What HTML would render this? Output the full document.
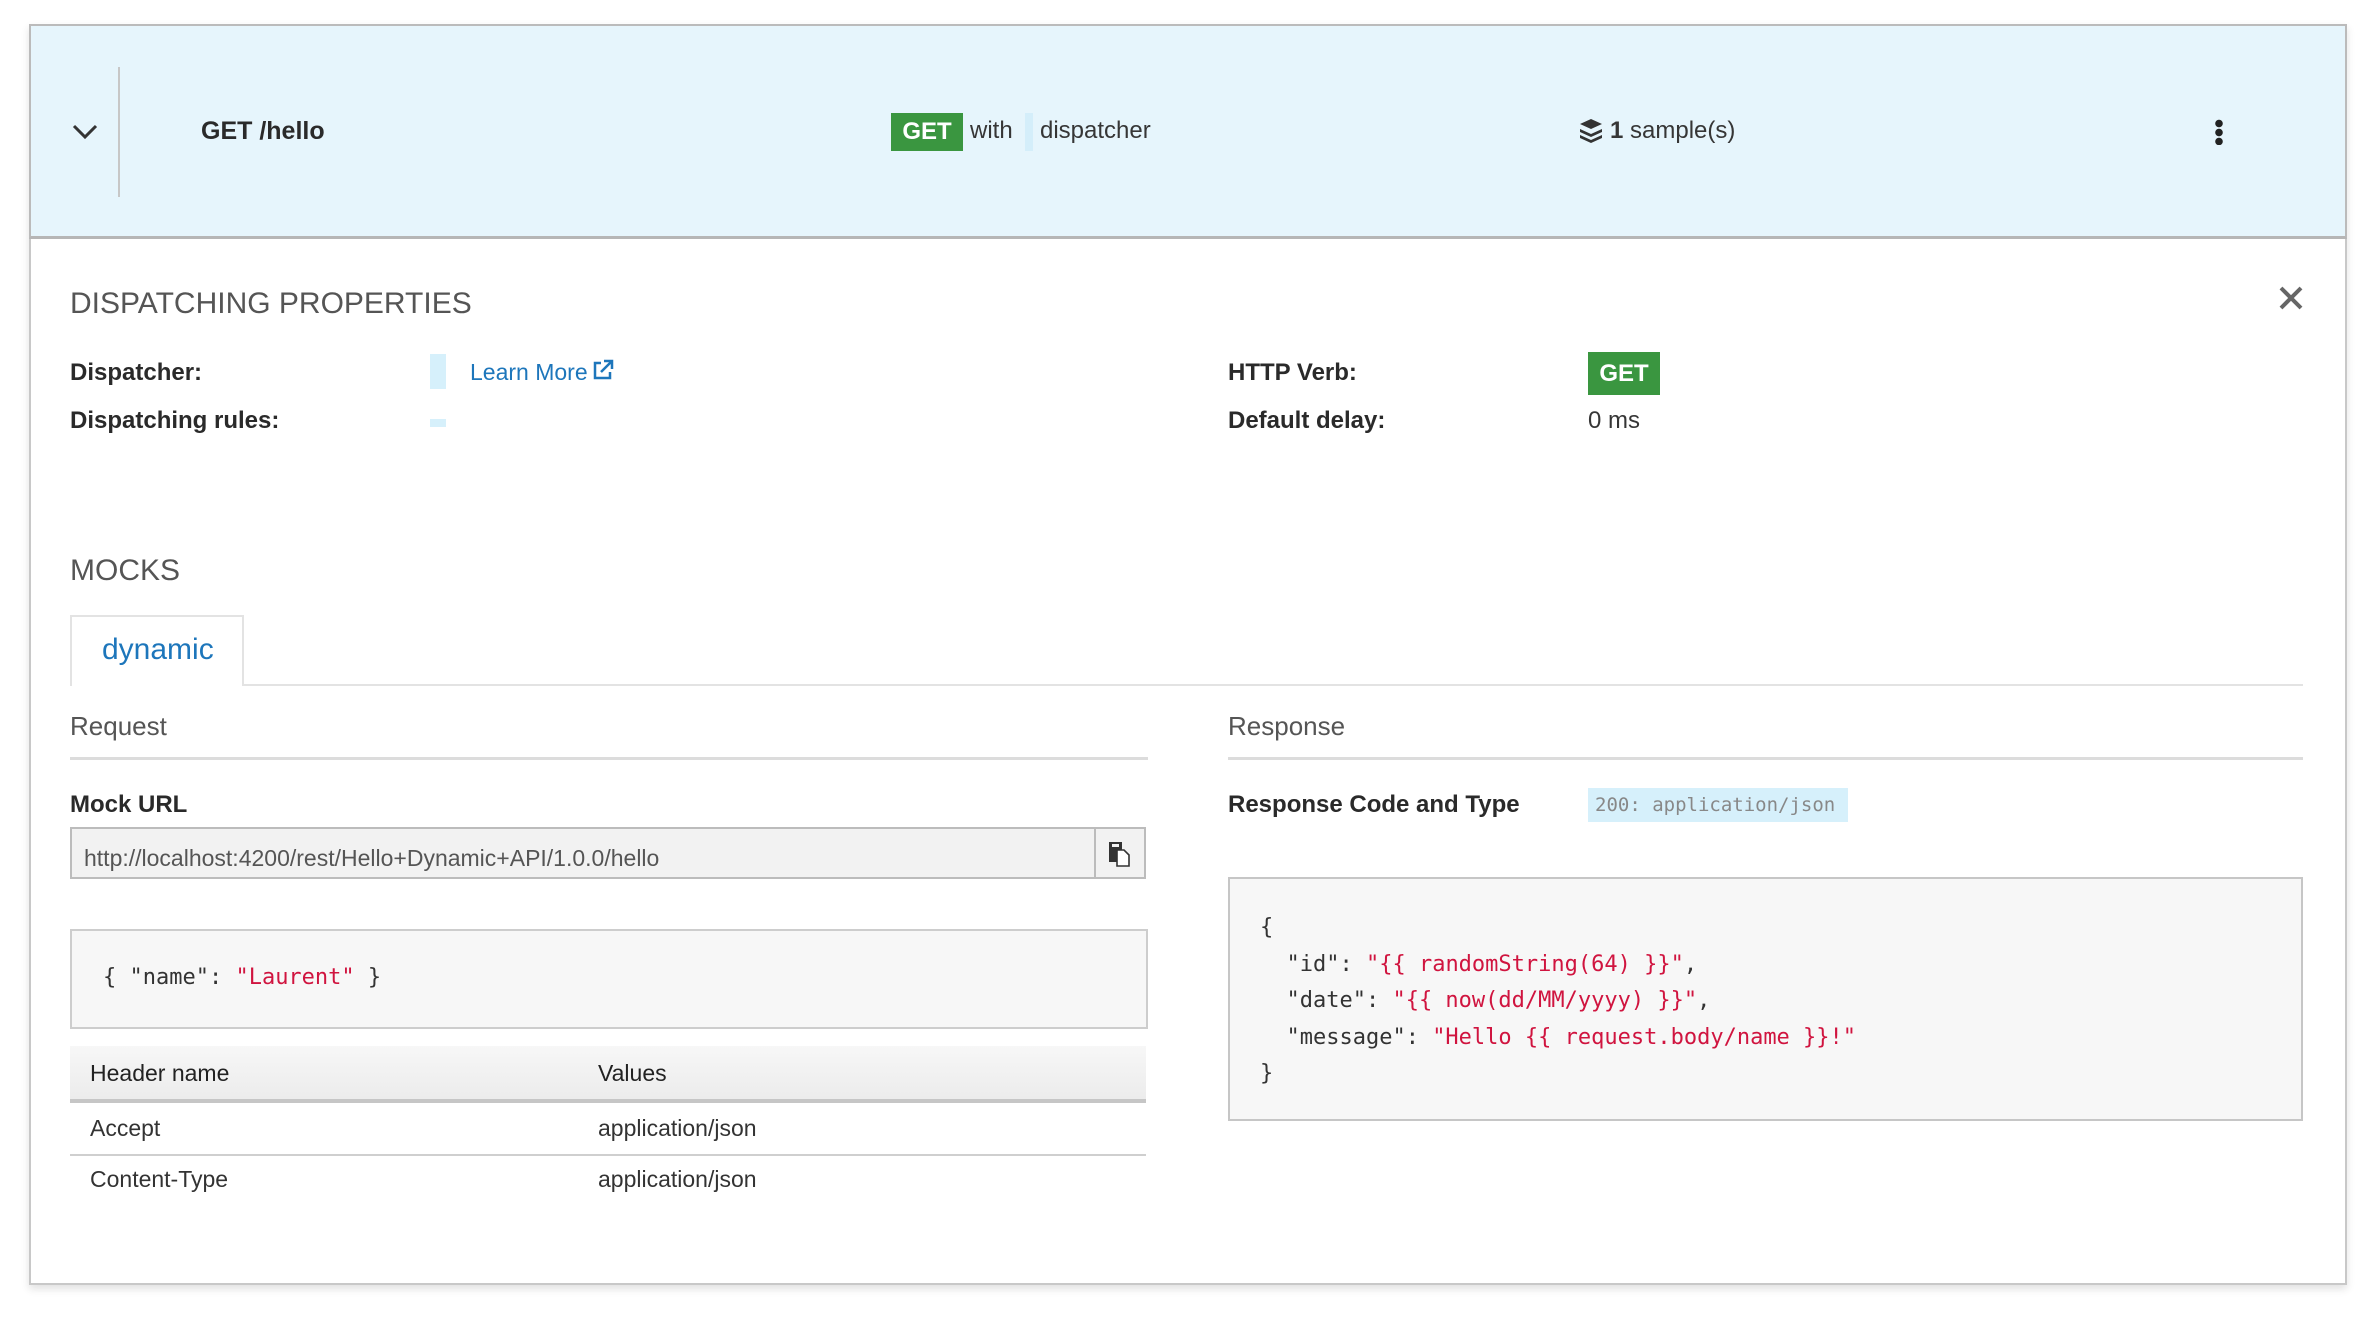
<!DOCTYPE html>
<html><head><meta charset="utf-8"><style>
*{box-sizing:border-box;margin:0;padding:0}
body{width:2380px;height:1318px;background:#fff;font-family:"Liberation Sans",sans-serif;color:#363636;position:relative;overflow:hidden}
.a{position:absolute;white-space:nowrap}
.card{position:absolute;left:29px;top:24px;width:2318px;height:1261px;border:2px solid #c8c8c8;border-top-color:#bbb;background:#fff;box-shadow:0 4px 8px rgba(0,0,0,.12)}
.hdr{position:absolute;left:29px;top:24px;width:2318px;height:215px;background:#e6f5fc;border:2px solid #bbb;border-bottom:3px solid #b6b6b6}
.b{font-weight:bold;color:#2a2a2a}
.badge{background:#3a9640;color:#fff;font-weight:bold;text-align:center}
.mono{font-family:"DejaVu Sans Mono","Liberation Mono",monospace}
.red{color:#d0143f}
</style></head><body>
<div class="card"></div>
<div class="hdr"></div>
<svg class="a" style="left:72px;top:122px" width="26" height="20" viewBox="0 0 26 20"><path d="M2 4 L13 15 L24 4" fill="none" stroke="#333" stroke-width="3"/></svg>
<div class="a" style="left:118px;top:67px;width:2px;height:130px;background:#c7c7c7"></div>
<div class="a b" style="left:201px;top:117px;font-size:25px">GET /hello</div>
<div class="a badge" style="left:891px;top:113px;width:72px;height:38px;font-size:24px;line-height:38px">GET</div>
<div class="a" style="left:970px;top:117px;font-size:24px">with</div>
<div class="a" style="left:1025px;top:113px;width:8px;height:38px;background:#d4eefa"></div>
<div class="a" style="left:1040px;top:117px;font-size:24px">dispatcher</div>
<svg class="a" style="left:1579px;top:118px" width="24" height="26" viewBox="0 0 24 26"><path d="M12 1 L23 6 L12 11 L1 6 Z" fill="#333"/><path d="M1 11 L12 16 L23 11 L23 14 L12 19 L1 14Z M1 17 L12 22 L23 17 L23 20 L12 25 L1 20Z" fill="#333"/></svg>
<div class="a" style="left:1610px;top:117px;font-size:24px"><b>1</b> sample(s)</div>
<div class="a" style="left:2215px;top:119px;width:8px;height:26px;background:radial-gradient(circle,#222 3.5px,transparent 4px) 0 0/8px 9px repeat-y"></div>

<svg class="a" style="left:2278px;top:285px" width="26" height="26" viewBox="0 0 26 26"><path d="M3 3 L23 23 M23 3 L3 23" stroke="#666" stroke-width="4"/></svg>
<div class="a" style="left:70px;top:287px;font-size:30px;color:#555">DISPATCHING PROPERTIES</div>
<div class="a b" style="left:70px;top:359px;font-size:24px">Dispatcher:</div>
<div class="a b" style="left:70px;top:407px;font-size:24px">Dispatching rules:</div>
<div class="a" style="left:430px;top:354px;width:16px;height:35px;background:#d6f0fb"></div>
<div class="a" style="left:430px;top:419px;width:16px;height:8px;background:#d6f0fb"></div>
<div class="a" style="left:470px;top:359px;font-size:23px;color:#1d76bb">Learn More</div>
<svg class="a" style="left:592px;top:359px" width="22" height="22" viewBox="0 0 22 22"><path d="M9 4 H3 V19 H18 V13" fill="none" stroke="#1d76bb" stroke-width="2.5"/><path d="M9 13 L19 3 M12 2 H20 V10" fill="none" stroke="#1d76bb" stroke-width="2.5"/></svg>
<div class="a b" style="left:1228px;top:359px;font-size:24px">HTTP Verb:</div>
<div class="a b" style="left:1228px;top:407px;font-size:24px">Default delay:</div>
<div class="a badge" style="left:1588px;top:352px;width:72px;height:43px;font-size:24px;line-height:43px">GET</div>
<div class="a" style="left:1588px;top:407px;font-size:24px">0 ms</div>

<div class="a" style="left:70px;top:554px;font-size:30px;color:#555">MOCKS</div>
<div class="a" style="left:70px;top:684px;width:2233px;height:2px;background:#e3e3e3"></div>
<div class="a" style="left:70px;top:615px;width:174px;height:71px;border:2px solid #e3e3e3;border-bottom:none;background:#fff"></div>
<div class="a" style="left:102px;top:633px;font-size:30px;color:#1d76bb">dynamic</div>

<div class="a" style="left:70px;top:711px;font-size:26px;color:#555">Request</div>
<div class="a" style="left:70px;top:757px;width:1078px;height:3px;background:#dcdcdc"></div>
<div class="a" style="left:1228px;top:711px;font-size:26px;color:#555">Response</div>
<div class="a" style="left:1228px;top:757px;width:1075px;height:3px;background:#dcdcdc"></div>

<div class="a b" style="left:70px;top:791px;font-size:24px">Mock URL</div>
<div class="a" style="left:70px;top:827px;width:1076px;height:52px;border:2px solid #bcbcbc;background:#f2f2f2"></div>
<div class="a" style="left:1094px;top:827px;width:52px;height:52px;border:2px solid #bcbcbc;background:#f2f2f2"></div>
<svg class="a" style="left:1107px;top:841px" width="24" height="26" viewBox="0 0 24 26"><rect x="2" y="1" width="13" height="20" fill="#333"/><rect x="5" y="3" width="7" height="3" fill="#f2f2f2"/><path d="M10 9 H17 L22 14 V25 H10 Z" fill="#fff" stroke="#333" stroke-width="1.6"/></svg>
<div class="a" style="left:84px;top:845px;font-size:23px;color:#555">http://localhost:4200/rest/Hello+Dynamic+API/1.0.0/hello</div>

<div class="a" style="left:70px;top:929px;width:1078px;height:100px;border:2px solid #cdcdcd;background:#f7f7f7"></div>
<div class="a mono" style="left:103px;top:965px;font-size:22px;color:#333">{ "name": <span class="red">"Laurent"</span> }</div>

<div class="a" style="left:70px;top:1046px;width:1076px;height:57px;background:linear-gradient(#f7f7f7,#ececec);border-bottom:4px solid #c6c6c6"></div>
<div class="a" style="left:90px;top:1060px;font-size:23px;color:#222">Header name</div>
<div class="a" style="left:598px;top:1060px;font-size:23px;color:#222">Values</div>
<div class="a" style="left:90px;top:1115px;font-size:23px;color:#333">Accept</div>
<div class="a" style="left:598px;top:1115px;font-size:23px;color:#333">application/json</div>
<div class="a" style="left:70px;top:1154px;width:1076px;height:2px;background:#cfcfcf"></div>
<div class="a" style="left:90px;top:1166px;font-size:23px;color:#333">Content-Type</div>
<div class="a" style="left:598px;top:1166px;font-size:23px;color:#333">application/json</div>

<div class="a b" style="left:1228px;top:791px;font-size:24px">Response Code and Type</div>
<div class="a mono" style="left:1588px;top:788px;width:260px;height:34px;background:#d6f0fb;color:#888;font-size:19px;line-height:34px;padding-left:7px">200: application/json</div>

<div class="a" style="left:1228px;top:877px;width:1075px;height:244px;border:2px solid #c6c6c6;background:#f7f7f7"></div>
<div class="a mono" style="left:1260px;top:910px;font-size:22px;line-height:36.5px;color:#333;white-space:pre">{
  "id": <span class="red">"{{ randomString(64) }}"</span>,
  "date": <span class="red">"{{ now(dd/MM/yyyy) }}"</span>,
  "message": <span class="red">"Hello {{ request.body/name }}!"</span>
}</div>
</body></html>
